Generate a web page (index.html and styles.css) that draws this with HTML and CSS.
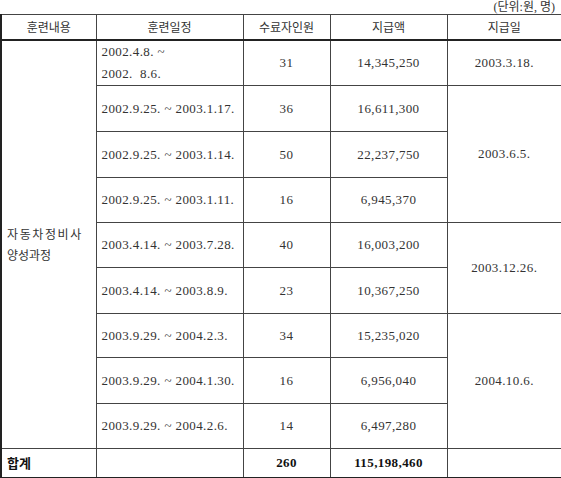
FILE: index.html
```html
<!DOCTYPE html>
<html lang="ko">
<head>
    <meta charset="UTF-8">
    <title>훈련비 지급 현황</title>
    <link rel="stylesheet" href="styles.css">
</head>
<body>
    <div class="unit">(단위:원, 명)</div>
    <table class="grid">
        <colgroup>
            <col class="c1">
            <col class="c2">
            <col class="c3">
            <col class="c4">
            <col class="c5">
        </colgroup>
        <thead>
            <tr class="head">
                <th>훈련내용</th>
                <th>훈련일정</th>
                <th>수료자인원</th>
                <th>지급액</th>
                <th>지급일</th>
            </tr>
        </thead>
        <tbody>
            <tr class="r46">
                <td class="course" rowspan="9"><span class="spread">자동차정비사</span><br>양성과정</td>
                <td class="date two">2002.4.8. ~<br>2002.&nbsp; 8.6.</td>
                <td>31</td>
                <td>14,345,250</td>
                <td>2003.3.18.</td>
            </tr>
            <tr class="r46">
                <td class="date">2002.9.25. ~ 2003.1.17.</td>
                <td>36</td>
                <td>16,611,300</td>
                <td rowspan="3">2003.6.5.</td>
            </tr>
            <tr class="r46">
                <td class="date">2002.9.25. ~ 2003.1.14.</td>
                <td>50</td>
                <td>22,237,750</td>
            </tr>
            <tr class="r45">
                <td class="date">2002.9.25. ~ 2003.1.11.</td>
                <td>16</td>
                <td>6,945,370</td>
            </tr>
            <tr class="r45">
                <td class="date">2003.4.14. ~ 2003.7.28.</td>
                <td>40</td>
                <td>16,003,200</td>
                <td rowspan="2">2003.12.26.</td>
            </tr>
            <tr class="r46">
                <td class="date">2003.4.14. ~ 2003.8.9.</td>
                <td>23</td>
                <td>10,367,250</td>
            </tr>
            <tr class="r44">
                <td class="date">2003.9.29. ~ 2004.2.3.</td>
                <td>34</td>
                <td>15,235,020</td>
                <td rowspan="3">2004.10.6.</td>
            </tr>
            <tr class="r46">
                <td class="date">2003.9.29. ~ 2004.1.30.</td>
                <td>16</td>
                <td>6,956,040</td>
            </tr>
            <tr class="r45">
                <td class="date">2003.9.29. ~ 2004.2.6.</td>
                <td>14</td>
                <td>6,497,280</td>
            </tr>
            <tr class="total">
                <td class="label">합계</td>
                <td></td>
                <td>260</td>
                <td>115,198,460</td>
                <td></td>
            </tr>
        </tbody>
    </table>
</body>
</html>
```

FILE: styles.css
```css
body {
    margin: 0;
    background: #fff;
    color: #333;
    font-family: "Liberation Serif", "Noto Sans CJK KR", serif;
    font-size: 13px;
}
.unit {
    height: 14px;
    line-height: 14px;
    text-align: right;
    padding-right: 6px;
    font-size: 12px;
    color: #333;
}
.grid {
    width: 561px;
    border-collapse: collapse;
    table-layout: fixed;
    border: 2px solid #222;
    border-top: 1px solid #555;
}
.c1 { width: 95px; }
.c2 { width: 147px; }
.c3 { width: 87px; }
.c4 { width: 117px; }
.c5 { width: 115px; }
th, td {
    border: 1px solid #444;
    padding: 0;
    text-align: center;
    vertical-align: middle;
    font-weight: normal;
    letter-spacing: 0.4px;
}
th {
    font-family: "Noto Sans CJK KR", sans-serif;
    font-size: 12px;
    letter-spacing: 0;
    color: #333;
}
.head { height: 25px; }
.head th { border-bottom: 2px solid #222; }
.r46 { height: 46px; }
.r45 { height: 45px; }
.r44 { height: 44px; }
.date {
    text-align: left;
    padding-left: 5px;
}
.two { line-height: 22px; }
.course {
    text-align: left;
    padding-left: 5px;
    line-height: 21px;
    font-size: 12px;
    letter-spacing: 0;
    font-family: "Noto Sans CJK KR", sans-serif;
}
.spread { letter-spacing: 1.6px; }
.total { height: 29px; }
.total td {
    font-weight: bold;
    color: #111;
}
.total .label {
    text-align: left;
    padding-left: 5px;
    letter-spacing: 0;
    font-family: "Noto Sans CJK KR", sans-serif;
}
```
